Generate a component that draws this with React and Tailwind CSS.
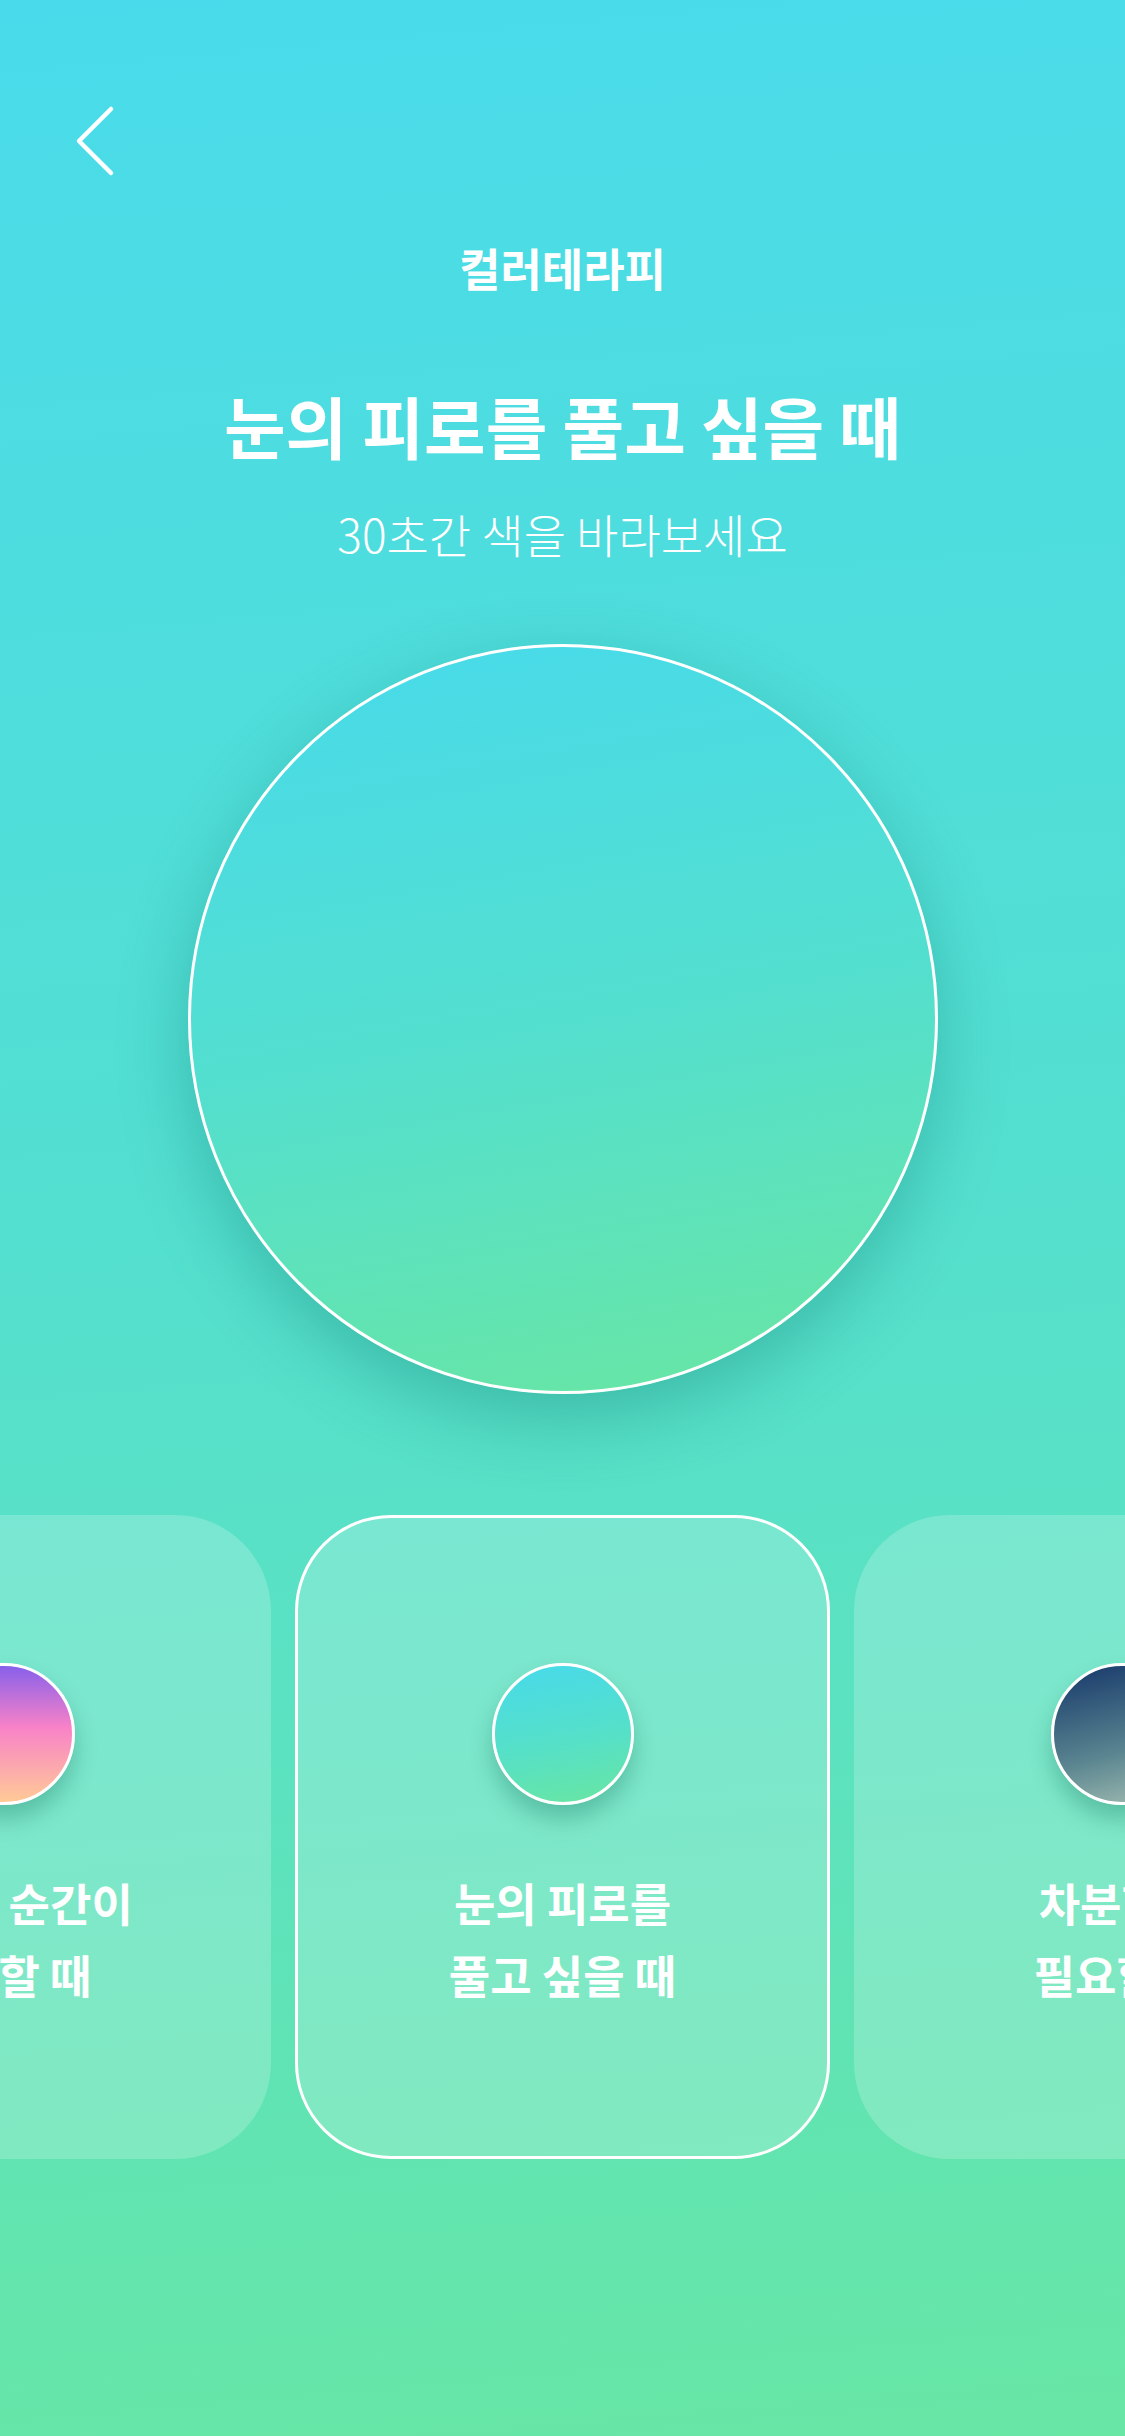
const cards = [
  {
    lines: ["설레는 순간이", "필요할 때"],
    swatch: "bg-[linear-gradient(180deg,#8760ea_0%,#f882c8_45%,#ffca96_100%)]",
  },
  {
    lines: ["눈의 피로를", "풀고 싶을 때"],
    swatch: "bg-[linear-gradient(170deg,#47daeb_0%,#55e0c8_55%,#69e6a2_100%)]",
    active: true,
  },
  {
    lines: ["차분함이", "필요할 때"],
    swatch: "bg-[linear-gradient(165deg,#15376a_0%,#5a8590_60%,#a6c0b3_100%)]",
  },
];

function MoodCard({ lines, swatch, active }) {
  return (
    <div
      className={`flex h-[644px] w-[535px] shrink-0 flex-col items-center rounded-[96px] border-[3px] bg-white/20 pt-[145px] ${
        active ? "border-white" : "border-transparent"
      }`}
    >
      <div
        className={`h-[142px] w-[142px] rounded-full border-[3px] border-white shadow-[0_14px_22px_rgba(0,90,70,0.28)] ${swatch}`}
      />
      <div className="mt-[62px] text-center text-[45px] font-bold leading-[72px] text-white">
        {lines.map((l) => (
          <div key={l} className="whitespace-nowrap">
            {l}
          </div>
        ))}
      </div>
    </div>
  );
}

export default function App() {
  return (
    <div className="flex h-[2436px] w-full flex-col overflow-hidden bg-[linear-gradient(175deg,#49dbeb_0%,#52dfd2_45%,#5be2c0_70%,#67e6a4_100%)] font-['Noto_Sans_CJK_KR',sans-serif] text-white">
      {/* top bar */}
      <div className="pl-[75px] pt-[105px]">
        <svg width="40" height="72" viewBox="0 0 40 72" fill="none">
          <polyline
            points="36,4 4,36 36,68"
            stroke="white"
            strokeWidth="4.5"
            strokeLinecap="round"
            strokeLinejoin="round"
          />
        </svg>
      </div>

      <div className="mt-[68px] text-center text-[45px] font-semibold leading-[46px]">
        컬러테라피
      </div>

      <h1 className="mt-[98px] text-center text-[67px] font-bold leading-[72px]">
        눈의 피로를 풀고 싶을 때
      </h1>

      <p className="mt-[48px] text-center text-[46px] font-light leading-[48px]">
        30초간 색을 바라보세요
      </p>

      {/* big swatch */}
      <div className="mt-[87px] flex justify-center">
        <div className="h-[750px] w-[750px] rounded-full border-[3px] border-white bg-[linear-gradient(170deg,#47daeb_0%,#53dfcf_50%,#69e6a2_100%)] shadow-[0_24px_70px_rgba(0,100,90,0.3)]" />
      </div>

      {/* mood cards */}
      <div className="mt-[121px] flex justify-center gap-[24px]">
        {cards.map((c) => (
          <MoodCard key={c.lines[0]} {...c} />
        ))}
      </div>
    </div>
  );
}
